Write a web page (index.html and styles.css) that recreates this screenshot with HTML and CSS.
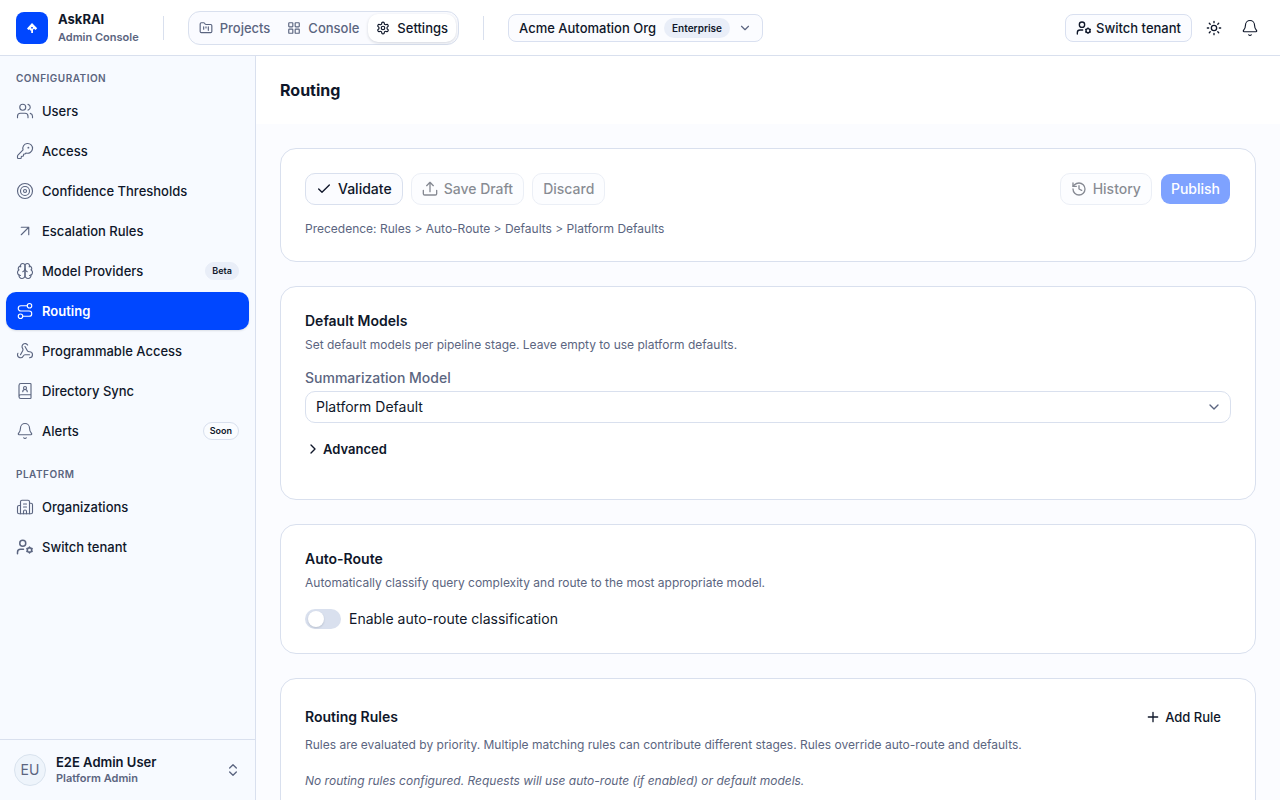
FILE: index.html
```html
<!DOCTYPE html>
<html lang="en">
<head>
    <meta charset="UTF-8">
    <meta name="viewport" content="width=device-width, initial-scale=1.0">
    <title>Routing - AskRAI Admin Console</title>
    <link rel="stylesheet" href="styles.css">
</head>
<body>
<header class="topbar">
    <div class="logo">
        <svg viewBox="0 0 32 32"><path fill="#fff" fill-rule="evenodd" d="M16 11l5.200 5.200-1.700 1.800-1.500-1.300-1 1.100V21h-1.800v-2.600h-1l-.8-1.200-.9.8-1.500-1.500zM15.200 15v1.600h1.600V15z"/></svg>
    </div>
    <div class="brand">
        <strong>AskRAI</strong>
        <span>Admin Console</span>
    </div>
    <div class="divider"></div>
    <nav class="tabs" aria-label="Sections">
        <a href="#projects">
            <svg class="icon" viewBox="0 0 24 24"><path d="M4 20h16a2 2 0 0 0 2-2V8a2 2 0 0 0-2-2h-7.900a2 2 0 0 1-1.690-.9L9.600 3.900A2 2 0 0 0 7.930 3H4a2 2 0 0 0-2 2v13c0 1.100.9 2 2 2Z"/><path d="M8 10v4M12 10v2M16 10v6"/></svg>
            Projects
        </a>
        <a href="#console">
            <svg class="icon" viewBox="0 0 24 24"><rect x="3" y="3" width="7" height="7" rx="1"/><rect x="14" y="3" width="7" height="7" rx="1"/><rect x="14" y="14" width="7" height="7" rx="1"/><rect x="3" y="14" width="7" height="7" rx="1"/></svg>
            Console
        </a>
        <a href="#settings" class="active">
            <svg class="icon" viewBox="0 0 24 24"><path d="M12.220 2h-.44a2 2 0 0 0-2 2v.18a2 2 0 0 1-1 1.730l-.43.25a2 2 0 0 1-2 0l-.15-.08a2 2 0 0 0-2.730.73l-.22.38a2 2 0 0 0 .73 2.730l.15.1a2 2 0 0 1 1 1.720v.51a2 2 0 0 1-1 1.740l-.15.09a2 2 0 0 0-.73 2.730l.22.38a2 2 0 0 0 2.730.73l.15-.08a2 2 0 0 1 2 0l.43.25a2 2 0 0 1 1 1.730V20a2 2 0 0 0 2 2h.44a2 2 0 0 0 2-2v-.18a2 2 0 0 1 1-1.730l.43-.25a2 2 0 0 1 2 0l.15.08a2 2 0 0 0 2.730-.73l.22-.39a2 2 0 0 0-.73-2.730l-.15-.08a2 2 0 0 1-1-1.740v-.5a2 2 0 0 1 1-1.740l.15-.09a2 2 0 0 0 .73-2.730l-.22-.38a2 2 0 0 0-2.730-.73l-.15.08a2 2 0 0 1-2 0l-.43-.25a2 2 0 0 1-1-1.730V4a2 2 0 0 0-2-2z"/><circle cx="12" cy="12" r="3"/></svg>
            Settings
        </a>
    </nav>
    <div class="divider"></div>
    <button type="button" class="org">
        Acme Automation Org
        <span class="plan">Enterprise</span>
        <svg class="icon" viewBox="0 0 24 24"><path d="m6 9 6 6 6-6"/></svg>
    </button>
    <div class="topbar-actions">
        <button type="button" class="tenant">
            <svg class="icon" viewBox="0 0 24 24"><path d="M10 15H6a4 4 0 0 0-4 4v2"/><circle cx="9" cy="7" r="4"/><circle cx="18" cy="16" r="3"/><path d="M18 12v1M18 19v1M14.500 14l.9.500M20.600 17.500l.9.500M14.500 18l.9-.5M20.600 14.500l.9-.5"/></svg>
            Switch tenant
        </button>
        <button type="button" class="icon-btn" aria-label="Toggle theme">
            <svg class="icon" viewBox="0 0 24 24"><circle cx="12" cy="12" r="4"/><path d="M12 2v2M12 20v2M4.930 4.930l1.410 1.410M17.660 17.660l1.410 1.410M2 12h2M20 12h2M6.340 17.660l-1.410 1.410M19.070 4.930l-1.410 1.410"/></svg>
        </button>
        <button type="button" class="icon-btn bell" aria-label="Notifications">
            <svg class="icon" viewBox="0 0 24 24"><path d="M10.268 21a2 2 0 0 0 3.464 0M3.262 15.326A1 1 0 0 0 4 17h16a1 1 0 0 0 .74-1.673C19.410 13.956 18 12.499 18 8A6 6 0 0 0 6 8c0 4.499-1.411 5.956-2.738 7.326"/></svg>
        </button>
    </div>
</header>

<div class="layout">
    <aside class="sidebar">
        <nav class="menu" aria-label="Settings">
            <h2>Configuration</h2>
            <ul>
                <li><a href="#users">
                    <svg class="icon" viewBox="0 0 24 24"><path d="M16 21v-2a4 4 0 0 0-4-4H6a4 4 0 0 0-4 4v2"/><circle cx="9" cy="7" r="4"/><path d="M22 21v-2a4 4 0 0 0-3-3.870M16 3.130a4 4 0 0 1 0 7.750"/></svg>
                    Users
                </a></li>
                <li><a href="#access">
                    <svg class="icon" viewBox="0 0 24 24"><path d="M2.586 17.414A2 2 0 0 0 2 18.828V21a1 1 0 0 0 1 1h3a1 1 0 0 0 1-1v-1a1 1 0 0 1 1-1h1a1 1 0 0 0 1-1v-1a1 1 0 0 1 1-1h.172a2 2 0 0 0 1.414-.586l.814-.814a6.500 6.500 0 1 0-4-4z"/><circle cx="16.500" cy="7.500" r=".5" fill="currentColor"/></svg>
                    Access
                </a></li>
                <li><a href="#confidence">
                    <svg class="icon" viewBox="0 0 24 24"><circle cx="12" cy="12" r="10"/><circle cx="12" cy="12" r="6"/><circle cx="12" cy="12" r="2"/></svg>
                    Confidence Thresholds
                </a></li>
                <li><a href="#escalation">
                    <svg class="icon" viewBox="0 0 24 24"><path d="M7 7h10v10M7 17 17 7"/></svg>
                    Escalation Rules
                </a></li>
                <li><a href="#providers">
                    <svg class="icon" viewBox="0 0 24 24"><path d="M12 5a3 3 0 1 0-5.997.125 4 4 0 0 0-2.526 5.770 4 4 0 0 0 .556 6.588A4 4 0 1 0 12 18Z"/><path d="M12 5a3 3 0 1 1 5.997.125 4 4 0 0 1 2.526 5.770 4 4 0 0 1-.556 6.588A4 4 0 1 1 12 18Z"/><path d="M15 13a4.500 4.500 0 0 1-3-4 4.500 4.500 0 0 1-3 4M17.599 6.500a3 3 0 0 0 .399-1.375M6.003 5.125A3 3 0 0 0 6.401 6.500M3.477 10.896a4 4 0 0 1 .585-.396M19.938 10.500a4 4 0 0 1 .585.396M6 18a4 4 0 0 1-1.967-.516M19.967 17.484A4 4 0 0 1 18 18"/></svg>
                    Model Providers
                    <span class="badge">Beta</span>
                </a></li>
                <li><a href="#routing" class="active" aria-current="page">
                    <svg class="icon" viewBox="0 0 24 24"><circle cx="6" cy="19" r="3"/><path d="M9 19h8.500a3.500 3.500 0 0 0 0-7h-11a3.500 3.500 0 0 1 0-7H15"/><circle cx="18" cy="5" r="3"/></svg>
                    Routing
                </a></li>
                <li><a href="#programmable">
                    <svg class="icon" viewBox="0 0 24 24"><path d="M18 16.980h-5.990c-1.100 0-1.950.94-2.480 1.900A4 4 0 0 1 2 17c.01-.7.2-1.400.57-2"/><path d="m6 17 3.130-5.780c.53-.97.1-2.180-.5-3.100a4 4 0 1 1 6.890-4.060"/><path d="m12 6 3.130 5.730C15.660 12.700 16.900 13 18 13a4 4 0 0 1 0 8"/></svg>
                    Programmable Access
                </a></li>
                <li><a href="#directory">
                    <svg class="icon" viewBox="0 0 24 24"><path d="M4 19.500v-15A2.500 2.500 0 0 1 6.500 2H19a1 1 0 0 1 1 1v18a1 1 0 0 1-1 1H6.500a1 1 0 0 1 0-5H20"/><circle cx="12" cy="8" r="2"/><path d="M15 13a3 3 0 1 0-6 0"/></svg>
                    Directory Sync
                </a></li>
                <li><a href="#alerts">
                    <svg class="icon" viewBox="0 0 24 24"><path d="M10.268 21a2 2 0 0 0 3.464 0M3.262 15.326A1 1 0 0 0 4 17h16a1 1 0 0 0 .74-1.673C19.410 13.956 18 12.499 18 8A6 6 0 0 0 6 8c0 4.499-1.411 5.956-2.738 7.326"/></svg>
                    Alerts
                    <span class="badge outline">Soon</span>
                </a></li>
            </ul>
            <h2>Platform</h2>
            <ul>
                <li><a href="#organizations">
                    <svg class="icon" viewBox="0 0 24 24"><path d="M10 12h4M10 8h4M14 21v-3a2 2 0 0 0-4 0v3"/><path d="M6 10H4a2 2 0 0 0-2 2v7a2 2 0 0 0 2 2h16a2 2 0 0 0 2-2V9a2 2 0 0 0-2-2h-2"/><path d="M6 21V5a2 2 0 0 1 2-2h8a2 2 0 0 1 2 2v16"/></svg>
                    Organizations
                </a></li>
                <li><a href="#tenant">
                    <svg class="icon bold" viewBox="0 0 24 24"><path d="M10 15H6a4 4 0 0 0-4 4v2"/><circle cx="9" cy="7" r="4"/><circle cx="18" cy="16" r="3"/><path d="M18 12v1M18 19v1M14.500 14l.9.500M20.600 17.500l.9.500M14.500 18l.9-.5M20.600 14.500l.9-.5"/></svg>
                    Switch tenant
                </a></li>
            </ul>
        </nav>
        <button type="button" class="account">
            <span class="avatar">EU</span>
            <span class="account-text">
                <strong>E2E Admin User</strong>
                <span>Platform Admin</span>
            </span>
            <svg class="icon" viewBox="0 0 24 24"><path d="m7 15 5 5 5-5M7 9l5-5 5 5"/></svg>
        </button>
    </aside>

    <main>
        <div class="page-header">
            <h1>Routing</h1>
        </div>
        <div class="content">
            <section class="card">
                <div class="toolbar">
                    <button type="button" class="btn">
                        <svg class="icon" viewBox="0 0 24 24"><path d="M20 6 9 17l-5-5"/></svg>
                        Validate
                    </button>
                    <button type="button" class="btn" disabled>
                        <svg class="icon" viewBox="0 0 24 24"><path d="M12 16V2M7 7l5-5 5 5M2 14v5a2 2 0 0 0 2 2h16a2 2 0 0 0 2-2v-5"/></svg>
                        Save Draft
                    </button>
                    <button type="button" class="btn" disabled>Discard</button>
                    <div class="toolbar-end">
                        <button type="button" class="btn" disabled>
                            <svg class="icon" viewBox="0 0 24 24"><path d="M3 12a9 9 0 1 0 9-9 9.750 9.750 0 0 0-6.740 2.740L3 8"/><path d="M3 3v5h5M12 7v5l4 2"/></svg>
                            History
                        </button>
                        <button type="button" class="btn primary" disabled>Publish</button>
                    </div>
                </div>
                <p class="note">Precedence: Rules &gt; Auto-Route &gt; Defaults &gt; Platform Defaults</p>
            </section>

            <section class="card models">
                <h2>Default Models</h2>
                <p class="desc">Set default models per pipeline stage. Leave empty to use platform defaults.</p>
                <label for="summarization">Summarization Model</label>
                <div class="select">
                    <select id="summarization">
                        <option>Platform Default</option>
                    </select>
                    <svg class="icon" viewBox="0 0 24 24"><path d="m6 9 6 6 6-6"/></svg>
                </div>
                <button type="button" class="advanced" aria-expanded="false">
                    <svg class="icon" viewBox="0 0 24 24"><path d="m9 18 6-6-6-6"/></svg>
                    Advanced
                </button>
            </section>

            <section class="card">
                <h2>Auto-Route</h2>
                <p class="desc">Automatically classify query complexity and route to the most appropriate model.</p>
                <div class="switch-row">
                    <input type="checkbox" role="switch" id="auto-route">
                    <label for="auto-route">Enable auto-route classification</label>
                </div>
            </section>

            <section class="card">
                <div class="card-head">
                    <h2>Routing Rules</h2>
                    <button type="button" class="add">
                        <svg class="icon" viewBox="0 0 24 24"><path d="M5 12h14M12 5v14"/></svg>
                        Add Rule
                    </button>
                </div>
                <p class="desc">Rules are evaluated by priority. Multiple matching rules can contribute different stages. Rules override auto-route and defaults.</p>
                <p class="empty">No routing rules configured. Requests will use auto-route (if enabled) or default models.</p>
            </section>
        </div>
    </main>
</div>
</body>
</html>
```
FILE: styles.css
```css
* {
    box-sizing: border-box;
}
body {
    display: flex;
    flex-direction: column;
    height: 100vh;
    margin: 0;
    font-family: Inter, "Liberation Sans", sans-serif;
    font-size: 13px;
    line-height: 20px;
    color: #0f172a;
    background: #fbfcff;
}
h1, h2, p, ul {
    margin: 0;
    padding: 0;
}
ul {
    list-style: none;
}
a {
    color: inherit;
    text-decoration: none;
}
button, select {
    font: inherit;
    color: inherit;
    margin: 0;
    cursor: pointer;
}
button {
    white-space: nowrap;
}
.icon {
    width: 16px;
    height: 16px;
    flex: none;
    fill: none;
    stroke: currentColor;
    stroke-width: 2;
    stroke-linecap: round;
    stroke-linejoin: round;
}

/* top bar */
.topbar {
    display: flex;
    align-items: center;
    flex: none;
    height: 56px;
    padding: 0 16px;
    background: #fff;
    border-bottom: 1px solid #d9e0ee;
}
.logo {
    width: 32px;
    height: 32px;
    border-radius: 8px;
    background: #0047ff;
}
.logo svg {
    display: block;
}
.brand {
    display: flex;
    flex-direction: column;
    margin-left: 10px;
    white-space: nowrap;
}
.brand strong {
    font-size: 13px;
    font-weight: 700;
    line-height: 18px;
}
.brand span {
    font-size: 11px;
    font-weight: 600;
    line-height: 18px;
    color: #5b6580;
}
.divider {
    width: 1px;
    height: 24px;
    margin: 0 24px;
    background: #d9e0ee;
}
.tabs {
    display: flex;
    gap: 1px;
    padding: 2px;
    border: 1px solid #d9e0ee;
    border-radius: 12px;
    background: #fafbff;
}
.tabs a {
    display: flex;
    align-items: center;
    gap: 7px;
    height: 28px;
    padding: 0 8px;
    border-radius: 10px;
    font-weight: 500;
    color: #5b6580;
}
.tabs .icon {
    width: 14px;
    height: 14px;
}
.tabs .active {
    color: #0f172a;
    background: #fff;
    box-shadow: 0 1px 3px rgba(15, 23, 42, 0.16);
}
.org, .tenant {
    display: flex;
    align-items: center;
    height: 28px;
    border: 1px solid #d9e0f0;
    border-radius: 8px;
    background: #fbfcff;
    font-weight: 500;
}
.org {
    gap: 8px;
    padding: 0 10px;
}
.org .icon {
    width: 14px;
    height: 14px;
    color: #5b6580;
}
.plan {
    padding: 0 8px;
    border-radius: 10px;
    background: #e9eef8;
    font-size: 10px;
    font-weight: 600;
}
.topbar-actions {
    display: flex;
    align-items: center;
    gap: 8px;
    margin-left: auto;
}
.tenant {
    gap: 4px;
    padding: 0 10px;
}
.icon-btn {
    display: grid;
    place-items: center;
    width: 28px;
    height: 28px;
    padding: 0;
    border: 0;
    background: none;
}
.bell .icon {
    width: 18px;
    height: 18px;
    stroke-width: 1.5;
}

/* sidebar */
.layout {
    display: flex;
    flex: 1;
    min-height: 0;
}
.sidebar {
    display: flex;
    flex-direction: column;
    flex: none;
    width: 256px;
    background: #f7faff;
    border-right: 1px solid #d9e0ee;
}
.menu {
    flex: 1;
    padding: 8px 6px;
    overflow-y: auto;
}
.menu h2 {
    padding: 4px 10px;
    font-size: 10px;
    font-weight: 600;
    line-height: 20px;
    letter-spacing: 0.05em;
    text-transform: uppercase;
    color: #5b6580;
}
.menu ul {
    display: grid;
    gap: 2px;
    margin-bottom: 10px;
}
.menu a {
    display: flex;
    align-items: center;
    gap: 8px;
    height: 38px;
    padding: 0 10px;
    border-radius: 10px;
    font-weight: 500;
}
.menu .icon {
    width: 18px;
    height: 18px;
    stroke-width: 1.5;
    color: #5b6580;
}
.menu .icon.bold {
    stroke-width: 2;
}
.menu .active {
    color: #fff;
    font-weight: 600;
    background: #0047ff;
    box-shadow: 0 1px 2px rgba(15, 23, 42, 0.12);
}
.menu .active .icon {
    color: #fff;
}
.badge {
    margin-left: auto;
    padding: 0 6px;
    border: 1px solid #e9eef8;
    border-radius: 9px;
    background: #e9eef8;
    font-size: 9px;
    font-weight: 600;
    line-height: 16px;
}
.badge.outline {
    border-color: #d9e0ee;
    background: #fafcff;
}
.account {
    display: flex;
    align-items: center;
    gap: 10px;
    height: 61px;
    padding: 0 14px;
    border: 0;
    border-top: 1px solid #d9e0ee;
    background: none;
    text-align: left;
}
.avatar {
    width: 32px;
    border: 1px solid #d9e3ee;
    border-radius: 50%;
    background: #eef4fb;
    font-size: 14px;
    line-height: 30px;
    text-align: center;
    color: #5b6580;
}
.account-text {
    display: flex;
    flex: 1;
    flex-direction: column;
}
.account-text strong {
    font-weight: 600;
    line-height: 16px;
}
.account-text span {
    font-size: 11px;
    font-weight: 600;
    line-height: 16px;
    color: #5b6580;
}
.account .icon {
    color: #5b6580;
}

/* page */
main {
    flex: 1;
    min-width: 0;
    overflow-y: auto;
    scrollbar-width: none;
}
.page-header {
    padding: 24px;
    background: #fff;
}
h1 {
    font-size: 16px;
    font-weight: 700;
    line-height: 20px;
}
.content {
    display: grid;
    gap: 24px;
    padding: 24px;
}
.card {
    padding: 24px;
    border: 1px solid #d9e0ee;
    border-radius: 16px;
    background: #fff;
}
.card h2 {
    font-size: 14px;
    font-weight: 600;
    line-height: 20px;
}
.toolbar, .toolbar-end {
    display: flex;
    align-items: center;
    gap: 8px;
}
.toolbar-end {
    margin-left: auto;
}
.btn {
    display: flex;
    align-items: center;
    gap: 6px;
    height: 32px;
    padding: 0 10px;
    border: 1px solid #d9e0ee;
    border-radius: 10px;
    background: #fbfcff;
    font-size: 14px;
    font-weight: 500;
}
.btn:disabled {
    opacity: 0.5;
    cursor: default;
}
.btn.primary {
    border-color: transparent;
    background: #0047ff;
    background-clip: padding-box;
    color: #fff;
}
.note {
    margin-top: 16px;
    font-size: 12px;
    line-height: 16px;
    color: #5b6580;
}
.desc {
    margin-top: 4px;
    font-size: 12px;
    color: #5b6580;
}
.models label {
    display: block;
    margin: 16px 0 6px;
    font-size: 14px;
    font-weight: 500;
    line-height: 14px;
    color: #5b6580;
}
.models {
    padding-bottom: 40px;
}
.select {
    position: relative;
}
.select select {
    display: block;
    width: 100%;
    height: 32px;
    padding: 0 32px 0 10px;
    border: 1px solid #d9e0ee;
    border-radius: 10px;
    background: #fff;
    font-size: 14px;
    appearance: none;
}
.select .icon {
    position: absolute;
    top: 8px;
    right: 9px;
    color: #5b6580;
    pointer-events: none;
}
.advanced {
    display: flex;
    align-items: center;
    gap: 2px;
    margin-top: 16px;
    padding: 0;
    border: 0;
    background: none;
    font-weight: 600;
}
.switch-row {
    display: flex;
    align-items: center;
    gap: 8px;
    margin-top: 16px;
    font-size: 14px;
}
.switch-row input {
    width: 36px;
    height: 20px;
    margin: 0;
    padding: 2px 3px;
    border-radius: 10px;
    background: #d9e0ee;
    appearance: none;
    cursor: pointer;
}
.switch-row input::before {
    content: "";
    display: block;
    width: 16px;
    height: 16px;
    border-radius: 50%;
    background: #fff;
    box-shadow: 0 1px 2px rgba(15, 23, 42, 0.16);
}
.switch-row input:checked {
    background: #0047ff;
}
.switch-row input:checked::before {
    margin-left: auto;
}
.card-head {
    display: flex;
    align-items: center;
    justify-content: space-between;
}
.add {
    display: flex;
    align-items: center;
    gap: 4px;
    height: 28px;
    padding: 0 10px;
    border: 0;
    background: none;
    font-weight: 500;
}
.empty {
    margin-top: 16px;
    font-size: 12px;
    font-style: italic;
    color: #5b6580;
}
```
